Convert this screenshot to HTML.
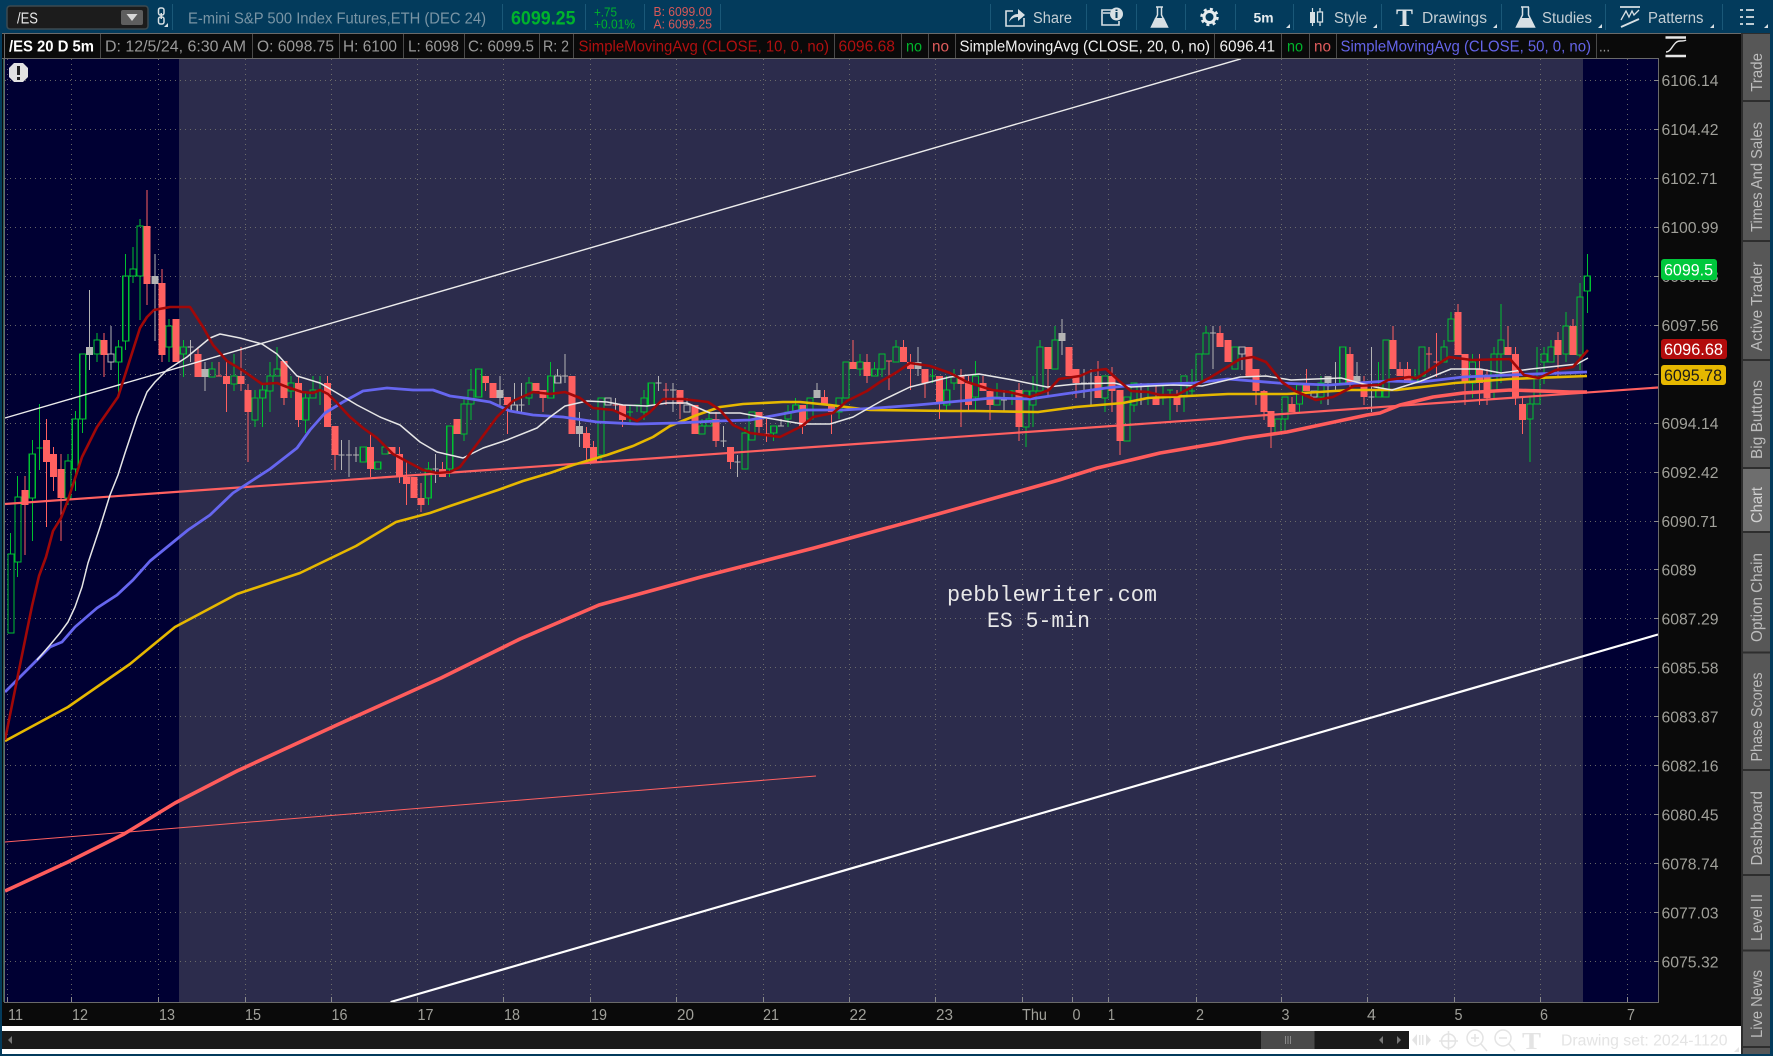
<!DOCTYPE html>
<html><head><meta charset="utf-8"><title>/ES 5-min chart</title>
<style>
html,body{margin:0;padding:0;background:#033b5c;width:1773px;height:1056px;overflow:hidden}
svg{display:block}
text{font-family:"Liberation Sans",sans-serif}
.ib{font-size:15.5px;fill:#9a9a9a}
.ax{font-size:15.5px;fill:#a0a09a}
.tb{font-size:15.5px;fill:#c4ced4}
.tab{font-size:15.5px;fill:#bcbcbc}
</style></head><body>
<svg width="1773" height="1056" viewBox="0 0 1773 1056" xmlns="http://www.w3.org/2000/svg">
<rect width="1773" height="1056" fill="#033b5c"/>
<!-- chart area -->
<rect x="2" y="33" width="1741" height="1021" fill="#0a0a0a"/>
<rect x="5" y="59" width="1653" height="943" fill="#2c2c4c"/>
<rect x="5" y="59" width="174" height="943" fill="#000033"/>
<rect x="1583" y="59" width="75" height="943" fill="#000033"/>
<!-- grid -->
<path fill="none" stroke="#7c7c70" stroke-opacity=".8" stroke-width="1" stroke-dasharray="1 4" d="M5 80.500H1658M5 129.500H1658M5 178.500H1658M5 227.500H1658M5 276.500H1658M5 325.500H1658M5 374.500H1658M5 423.500H1658M5 472.500H1658M5 521.500H1658M5 569.500H1658M5 618.500H1658M5 667.500H1658M5 716.500H1658M5 765.500H1658M5 814.500H1658M5 863.500H1658M5 912.500H1658M5 961.500H1658"/>
<path fill="none" stroke="#7c7c70" stroke-opacity=".8" stroke-width="1" stroke-dasharray="1 4" d="M7.500 59V1002M71.500 59V1002M158.500 59V1002M245.500 59V1002M331.500 59V1002M417.500 59V1002M503.500 59V1002M590.500 59V1002M676.500 59V1002M763.500 59V1002M849.500 59V1002M935.500 59V1002M1022.500 59V1002M1072.500 59V1002M1108.500 59V1002M1196.500 59V1002M1281.500 59V1002M1367.500 59V1002M1454.500 59V1002M1540.500 59V1002M1627.500 59V1002"/>
<!-- candles -->
<g fill="none" shape-rendering="crispEdges">
<path stroke="#ff6060" stroke-width="1" d="M25 476V555M46.700 419V527M53.700 447V491M61 454V541M104 333V377M147 190V305M162 269V362M176 319V362M198 347V377M219 362V376M226.700 362V412M241 347V391M248 384V462M284 361V405M298.700 376V427M327.300 376V427M335 426V470M370.700 433V477M392 447V454M399.300 447V483M406.700 462V505M414 477V498M421 483V512M442.700 462V477M457 419V434M485.700 376V391M493 383V398M507.300 398V434M536 383V391M543 390V412M572 376V434M586.700 427V462M593.700 441V462M622.700 405V427M666 383V405M680 390V419M695 405V434M716 412V447M730.700 447V469M759 412V434M766.700 419V442M802.700 405V434M824.300 390V405M831.700 405V434M853 340V369M867 354V383M889 361V390M903.300 340V362M910.700 354V390M925 369V398M939.300 376V419M961 369V427M968.400 376V412M982.800 376V391M990 391V420M1019 383V441M1048 347V397M1069 347V376M1076 369V398M1098 361V398M1112 367V412M1120 390V455M1156 383V405M1177 390V412M1220 326V347M1228 347V362M1249 347V376M1256 369V405M1264 390V420M1271 411V448M1292 397V412M1306.700 369V391M1350 347V390M1364 376V405M1393 326V369M1400 362V376M1407.700 362V383M1429 347V369M1436.500 333V377M1458 304V355M1465 354V405M1479.500 354V405M1487 369V405M1508 326V355M1515.600 347V405M1522.700 398V434M1558 332V378M1573 319V355"/>
<path stroke="#ff6060" stroke-width="1" d="M216 376h6M763.700 434h6M886 361h6M1426 354h6M1433.500 362h6M663 390h6M612.700 405h6"/>
<path stroke="#ff6060" stroke-width="7" d="M25 490V505M46.700 440V462M53.700 454V477M61 469V498M104 340V355M147 226V284M162 283V355M176 319V362M198 354V377M226.700 376V384M241 376V384M248 390V412M284 361V398M298.700 383V420M327.300 383V427M335 426V455M370.700 447V469M392 447V454M399.300 454V477M406.700 477V484M414 477V498M421 498V505M442.700 469V477M457 419V434M485.700 376V383M493 383V398M507.300 397V405M536 383V391M543 390V398M572 376V434M586.700 433V448M593.700 447V462M622.700 405V420M680 390V404M695 405V434M716 419V441M730.700 447V462M759 412V427M802.700 405V426M824.300 397V405M831.700 405V412M853 362V369M867 362V376M903.300 347V362M910.700 362V369M925 369V383M939.300 376V404M961 376V384M968.400 383V405M982.800 383V391M990 391V405M1019 390V427M1048 347V369M1069 347V376M1076 369V383M1098 376V398M1112 376V391M1120 390V441M1156 398V405M1177 397V405M1220 333V347M1228 340V362M1249 347V376M1256 369V391M1264 391V412M1271 411V427M1292 404V412M1306.700 383V391M1350 354V383M1364 383V397M1393 340V369M1400 369V376M1407.700 369V383M1458 312V355M1465 354V383M1479.500 369V383M1487 376V398M1508 347V355M1515.600 354V398M1522.700 404V420M1558 340V355M1573 326V355"/>
<path stroke="#00c030" stroke-width="1" d="M10.700 533V554M17.700 476V497M17.700 562V577M32.300 440V454M32.300 498V541M39.300 404V470M36.300 448h6M68 454V461M68 498V505M75.300 411V419M75.300 469V491M82.700 419V433M97 333V340M97 354V362M118.700 340V347M118.700 362V393M125.700 254V276M125.700 341V350M133 247V269M133 276V283M140 219V226M140 276V320M169 319V326M169 347V362M183.300 340V347M183.300 354V377M212 362V369M234 354V376M234 384V391M255 390V398M255 420V427M262.700 383V390M262.700 398V427M270 362V376M270 391V412M277 347V369M291 376V383M291 391V398M305.700 391V398M305.700 420V433M313 376V390M320 376V405M317 390h6M428.300 462V469M428.300 498V505M449.700 469V477M464 397V404M464 434V441M471 369V390M471 404V420M529 377V383M529 398V405M550.700 362V376M601 455V462M630 405V422M627 412h6M637 405V412M634 405h6M644 390V398M644 412V420M702 419V426M709 412V419M745 427V433M773.700 433V441M788 405V412M788 419V427M795.700 398V405M839 412V419M860 354V362M860 369V376M874.700 362V369M882 369V377M896 340V347M932.300 369V383M929.300 376h6M946.700 376V390M946.700 405V412M954 369V377M954 383V390M975.600 361V376M975.600 397V412M997 383V397M1012 390V405M1009 391h6M1026 427V447M1033 376V391M1033 405V427M1040 340V347M1055 326V340M1105 398V412M1134 405V412M1148 383V405M1145 384h6M1163 384V405M1160 398h6M1170 390V420M1167 390h6M1184 397V412M1192 369V397M1189 391h6M1206 326V333M1285 419V433M1299.500 404V412M1321 376V383M1321 397V404M1378.700 362V390M1414.800 369V377M1444 340V347M1451 312V319M1472.500 354V362M1472.500 383V398M1494 347V354M1494 391V398M1501 304V340M1501 354V383M1530 397V404M1530 419V462M1537 347V377M1544 347V354M1544 362V384M1551 340V347M1566 312V326M1566 354V362M1580 283V297M1580 355V370M1587.300 254V276M1587.300 291V313"/>
<path stroke="#00c030" stroke-width="1.200" d="M8 554h6V633h-6zM15 497h6V562h-6zM29.300 454h6V498h-6zM65 461h6V498h-6zM72.300 419h6V469h-6zM79.700 354h6V419h-6zM94 340h6V354h-6zM115.700 347h6V362h-6zM122.700 276h6V341h-6zM130 269h6V276h-6zM137 226h6V276h-6zM166 326h6V347h-6zM180.300 347h6V354h-6zM209 369h6V377h-6zM231 376h6V384h-6zM252 398h6V420h-6zM259.700 390h6V398h-6zM267 376h6V391h-6zM274 369h6V376h-6zM288 383h6V391h-6zM302.700 398h6V420h-6zM310 390h6V398h-6zM360.300 447h6V462h-6zM374.700 462h6V469h-6zM382 447h6V454h-6zM425.300 469h6V498h-6zM446.700 426h6V469h-6zM461 404h6V434h-6zM468 390h6V404h-6zM475.700 369h6V397h-6zM526 383h6V398h-6zM547.700 376h6V398h-6zM598 398h6V455h-6zM641 398h6V412h-6zM648.300 383h6V405h-6zM699 426h6V434h-6zM706 419h6V426h-6zM742 433h6V469h-6zM749 412h6V440h-6zM770.700 426h6V433h-6zM785 412h6V419h-6zM792.700 405h6V412h-6zM807 398h6V419h-6zM836 398h6V412h-6zM843 362h6V398h-6zM857 362h6V369h-6zM871.700 369h6V376h-6zM879 354h6V369h-6zM893 347h6V362h-6zM943.700 390h6V405h-6zM951 377h6V383h-6zM972.600 376h6V397h-6zM994 397h6V405h-6zM1023 391h6V427h-6zM1030 391h6V405h-6zM1037 347h6V391h-6zM1052 340h6V369h-6zM1102 376h6V398h-6zM1124 397h6V441h-6zM1131 383h6V405h-6zM1181 376h6V397h-6zM1196 354h6V383h-6zM1203 333h6V354h-6zM1232 347h6V369h-6zM1275 419h6V433h-6zM1282 397h6V419h-6zM1296.500 385h6V404h-6zM1318 383h6V397h-6zM1339.700 347h6V383h-6zM1375.700 390h6V397h-6zM1383 340h6V397h-6zM1411.800 377h6V383h-6zM1419 347h6V376h-6zM1441 347h6V362h-6zM1448 319h6V341h-6zM1469.500 362h6V383h-6zM1491 354h6V391h-6zM1498 340h6V354h-6zM1527 404h6V419h-6zM1534 377h6V404h-6zM1541 354h6V362h-6zM1548 347h6V362h-6zM1563 326h6V354h-6zM1577 297h6V355h-6zM1584.300 276h6V291h-6z"/>
<path stroke="#b4b4b4" stroke-width="1" d="M89.700 290V370M155 254V341M205 362V391M500 376V405M579.300 412V447M817 383V398M918 347V376M1062 319V355M1328 376V405M1357 362V383M111 326V354M111 362V370M514.300 383V405M557.700 369V376M687 398V405M1242 354V370M190.700 340V362M187.700 347h6M341.700 440V470M338.700 455h6M349 440V477M346 455h6M356 447V462M353 455h6M435.300 454V483M432.300 469h6M521.700 383V412M518.700 405h6M565 354V383M562 376h6M658.700 376V391M655.700 383h6M673 383V412M670 390h6M723.300 426V447M720.300 441h6M737.700 455V477M734.700 462h6M781 419V426M778 426h6M1004 390V412M1001 400h6M1084 369V398M1081 383h6M1091 369V405M1088 383h6M1141 383V405M1138 384h6M1213 326V369M1210 333h6M1335.500 362V390M1332.500 378h6M1371.500 347V412M1368.500 397h6M615.700 398V412"/>
<path stroke="#b4b4b4" stroke-width="7" d="M89.700 347V355M155 276V284M205 369V377M500 390V398M579.300 426V434M817 390V398M918 362V369M1062 333V341M1328 376V383M1357 376V383"/>
<path stroke="#b4b4b4" stroke-width="1.200" d="M108 354h6V362h-6zM511.300 405h6V412h-6zM554.700 376h6V383h-6zM605 398h6V405h-6zM684 405h6V412h-6zM1239 347h6V354h-6zM1311 391h6V397h-6z"/>
</g>
<!-- trend lines -->
<g fill="none" stroke-linejoin="round" stroke-linecap="butt">
<path stroke="#ececec" stroke-width="1.400" d="M5 418L1241 58.800"/>
<path stroke="#ffffff" stroke-width="2.200" d="M390.600 1002L1658 634.500"/>
<path stroke="#ff6060" stroke-width="1" d="M5 842L816 776"/>
<path stroke="#ff6060" stroke-width="2.200" d="M5 504L1658 387.500"/>
<!-- thick -->
<polyline stroke="#ff5c5c" stroke-width="3.600" points="5,891 68,862 124,834 175,803 237,771 339,724 441,678 520,639 599,605 701,577 814,548 938,514 1059,480 1097,468 1131,460 1160,453 1219,443 1245,438 1287,432 1320,425 1367,415 1380,413 1400,405 1433,397 1463,393 1510,390 1570,392 1587,392"/>
<!-- yellow -->
<polyline stroke="#e6b800" stroke-width="2.600" points="5,741 68,707 130,664 175,627 237,594 300,573 356,546 396,522 430,513 450,506 498,490 523,481 550,473 573,465 607,455 633,446 653,437 670,426 697,415 720,407 743,404 783,402 800,402 830,405 870,410 950,411 975,411 1038,412 1076,407 1123,403 1148,398 1228,394 1287,394 1350,390 1396,390 1455,383 1510,379 1587,376"/>
<!-- blue -->
<polyline stroke="#6666f0" stroke-width="2.800" points="5,692 37,660 50,647 62,642 75,627 97,608 117,595 133,580 150,561 188,530 210,515 233,493 253,480 270,469 297,448 310,430 325,413 343,402 363,391 387,388 413,390 433,390 450,396 465,398 490,402 510,411 533,415 563,417 597,422 637,424 677,423 717,421 750,420 777,415 803,410 843,410 877,408 917,405 950,402 992,398 1030,399 1064,394 1106,388 1135,385 1194,383 1228,379 1278,383 1329,385 1388,381 1421,382 1463,377 1510,375 1587,372"/>
<!-- white 20 -->
<polyline stroke="#e6e6e6" stroke-width="1.500" points="37,660 50,645 60,633 68,622 75,607 82,587 88,563 100,527 110,495 118,475 125,453 137,417 147,392 155,382 167,370 187,357 210,338 220,334 240,338 262,344 277,354 297,376 320,383 337,393 357,405 380,417 400,425 420,442 437,452 450,455 463,458 483,448 507,440 537,428 550,417 565,406 587,401 607,402 623,405 647,406 667,403 687,403 710,413 740,413 767,418 803,424 830,424 853,417 883,400 910,387 930,382 950,377 979,374 1013,380 1047,387 1076,384 1114,383 1131,387 1173,385 1202,386 1240,377 1266,376 1291,380 1341,378 1375,387 1392,390 1421,381 1451,369 1480,369 1501,373 1531,369 1577,364 1588,358"/>
<!-- red 10 -->
<polyline stroke="#a00808" stroke-width="2.600" points="5,740 21,660 32,606 39,576 46,557 53,531 61,518 68,500 82,457 97,427 118,397 133,350 140,328 147,317 154,310 170,307 190,307 203,327 213,345 227,361 242,370 262,384 277,383 287,387 302,392 313,393 320,390 328,394 337,403 350,417 363,428 377,438 393,454 408,462 423,470 437,473 450,472 460,467 480,440 497,417 513,401 533,392 550,394 565,392 580,398 593,408 613,410 637,421 650,412 663,399 683,399 708,402 720,410 733,425 750,433 780,437 802,426 813,417 833,413 847,401 867,391 880,382 897,372 910,363 930,366 950,373 967,382 992,390 1009,392 1030,397 1049,390 1059,379 1080,376 1091,371 1106,369 1118,380 1131,391 1148,392 1160,395 1177,395 1192,387 1211,377 1240,359 1253,357 1266,362 1282,382 1295,391 1316,400 1333,397 1354,386 1379,385 1388,380 1409,377 1417,378 1449,357 1472,360 1510,359 1524,375 1539,378 1556,370 1573,367 1588,350"/>
</g>
<!-- overlay text -->
<text x="947" y="601" font-size="21.800" textLength="210" lengthAdjust="spacingAndGlyphs" style="font-family:'Liberation Mono',monospace" fill="#e8e8e8">pebblewriter.com</text>
<text x="987" y="627" font-size="21.800" textLength="103" lengthAdjust="spacingAndGlyphs" style="font-family:'Liberation Mono',monospace" fill="#e8e8e8">ES 5-min</text>
<!-- alert icon -->
<path d="M14 63h9l5 5v9l-5 5h-9l-5-5v-9z" fill="#e2e2e2"/>
<rect x="17" y="66" width="3" height="9" fill="#222"/><rect x="17" y="77" width="3" height="3" fill="#222"/>
<!-- chart borders -->
<path fill="none" stroke="#6a6a6a" stroke-width="1" d="M4.500 33V1002.500H1658.500V58.500H2"/>
<path fill="none" stroke="#2f5f58" stroke-width="1" d="M3.500 59V1002"/>
<path fill="none" stroke="#6a6a6a" stroke-width="1" d="M2 33.500H1743"/>
<!-- bottom ticks -->
<path fill="none" stroke="#8a8a8a" stroke-width="1" d="M7.500 997V1002M71.500 997V1002M158.500 997V1002M245.500 997V1002M331.500 997V1002M417.500 997V1002M503.500 997V1002M590.500 997V1002M676.500 997V1002M763.500 997V1002M849.500 997V1002M935.500 997V1002M1022.500 997V1002M1072.500 997V1002M1108.500 997V1002M1196.500 997V1002M1281.500 997V1002M1367.500 997V1002M1454.500 997V1002M1540.500 997V1002M1627.500 997V1002"/>
<path fill="none" stroke="#8a8a8a" stroke-width="1" d="M1654 80.500h5M1654 129.500h5M1654 178.500h5M1654 227.500h5M1654 276.500h5M1654 325.500h5M1654 374.500h5M1654 423.500h5M1654 472.500h5M1654 521.500h5M1654 569.500h5M1654 618.500h5M1654 667.500h5M1654 716.500h5M1654 765.500h5M1654 814.500h5M1654 863.500h5M1654 912.500h5M1654 961.500h5"/>
<!-- info bar -->
<rect x="5" y="34" width="1653" height="24" fill="#0a0a0a"/>
<path fill="none" stroke="#4a4a4a" stroke-width="1" d="M100.500 34V58M252.500 34V58M339.500 34V58M403.500 34V58M464.500 34V58M539.500 34V58M573.500 34V58M834.500 34V58M901.500 34V58M928.500 34V58M955.500 34V58M1214.500 34V58M1281.500 34V58M1309.500 34V58M1336.500 34V58M1596.500 34V58"/>
<text x="9" y="51.500" font-size="15.500" font-weight="bold" fill="#fff" textLength="85" lengthAdjust="spacingAndGlyphs">/ES 20 D 5m</text>
<text class="ib" x="105" y="51.500" textLength="141" lengthAdjust="spacingAndGlyphs">D: 12/5/24, 6:30 AM</text>
<text class="ib" x="257" y="51.500" textLength="77" lengthAdjust="spacingAndGlyphs">O: 6098.75</text>
<text class="ib" x="343" y="51.500" textLength="54" lengthAdjust="spacingAndGlyphs">H: 6100</text>
<text class="ib" x="408" y="51.500" textLength="51" lengthAdjust="spacingAndGlyphs">L: 6098</text>
<text class="ib" x="468" y="51.500" textLength="66" lengthAdjust="spacingAndGlyphs">C: 6099.5</text>
<text class="ib" x="543" y="51.500" textLength="26" lengthAdjust="spacingAndGlyphs">R: 2</text>
<text class="ib" style="fill:#b01010" x="578.500" y="51.500" textLength="250.500" lengthAdjust="spacingAndGlyphs">SimpleMovingAvg (CLOSE, 10, 0, no)</text>
<text class="ib" style="fill:#b01010" x="838.500" y="51.500" textLength="56.500" lengthAdjust="spacingAndGlyphs">6096.68</text>
<text class="ib" style="fill:#00b32c" x="906" y="51.500" textLength="16" lengthAdjust="spacingAndGlyphs">no</text>
<text class="ib" style="fill:#e05c5c" x="932" y="51.500" textLength="17" lengthAdjust="spacingAndGlyphs">no</text>
<text class="ib" style="fill:#f0f0f0" x="959.500" y="51.500" textLength="250.500" lengthAdjust="spacingAndGlyphs">SimpleMovingAvg (CLOSE, 20, 0, no)</text>
<text class="ib" style="fill:#f0f0f0" x="1219.500" y="51.500" textLength="55.500" lengthAdjust="spacingAndGlyphs">6096.41</text>
<text class="ib" style="fill:#00b32c" x="1287" y="51.500" textLength="16" lengthAdjust="spacingAndGlyphs">no</text>
<text class="ib" style="fill:#e05c5c" x="1314" y="51.500" textLength="17" lengthAdjust="spacingAndGlyphs">no</text>
<text class="ib" style="fill:#6464e8" x="1340.500" y="51.500" textLength="250.500" lengthAdjust="spacingAndGlyphs">SimpleMovingAvg (CLOSE, 50, 0, no)</text>
<text class="ib" x="1599" y="51.500" textLength="11" lengthAdjust="spacingAndGlyphs">...</text>
<!-- toolbar -->
<path fill="none" stroke="#1a5878" stroke-width="1" d="M172.500 4V30M502.500 4V30M585.500 4V30M644.500 4V30M720.500 4V30M990.500 4V30M1086.500 4V30M1136.500 4V30M1185.500 4V30M1235.500 4V30M1293.500 4V30M1381.500 4V30M1501.500 4V30M1605.500 4V30M1722.500 4V30"/>
<rect x="7" y="6" width="141" height="23" rx="3" fill="#1c1c1c" stroke="#3c4a50" stroke-width="1.500"/>
<text x="17" y="23.500" font-size="15.500" fill="#e8e8e8" textLength="21" lengthAdjust="spacingAndGlyphs">/ES</text>
<rect x="121" y="10" width="22" height="15" rx="2" fill="#5e5e5e"/>
<path d="M126.500 14h11l-5.500 7z" fill="#d8d8d8"/>
<g fill="none" stroke="#d8e0e4" stroke-width="1.500"><rect x="158.500" y="8" width="5.500" height="7" rx="2"/><rect x="158.500" y="17" width="5.500" height="7" rx="2"/></g>
<path d="M161.250 13v6" stroke="#d8e0e4" stroke-width="1.500"/>
<path d="M168 27h-4l4-4z" fill="#d8e0e4"/>
<text x="188" y="23.500" font-size="15.500" fill="#7a95a5" textLength="298" lengthAdjust="spacingAndGlyphs">E-mini S&amp;P 500 Index Futures,ETH (DEC 24)</text>
<text x="511" y="24.500" font-size="19" font-weight="bold" fill="#00b32c" textLength="64.500" lengthAdjust="spacingAndGlyphs">6099.25</text>
<text x="594" y="16.500" font-size="12.500" fill="#00b32c" textLength="23" lengthAdjust="spacingAndGlyphs">+.75</text>
<text x="594" y="28.500" font-size="12.500" fill="#00b32c" textLength="41" lengthAdjust="spacingAndGlyphs">+0.01%</text>
<text x="653.500" y="16" font-size="12.500" fill="#d85858" textLength="58.500" lengthAdjust="spacingAndGlyphs">B: 6099.00</text>
<text x="653.500" y="28.500" font-size="12.500" fill="#d85858" textLength="58.500" lengthAdjust="spacingAndGlyphs">A: 6099.25</text>
<!-- share icon -->
<path fill="none" stroke="#d8e0e4" stroke-width="1.600" d="M1013 11h-7v15h18v-8"/>
<path fill="#d8e0e4" d="M1009 22c1-5 5-8 9-8v-5l7 6-7 6v-4c-4 0-7 2-9 5z"/>
<text class="tb" x="1033" y="23" textLength="39" lengthAdjust="spacingAndGlyphs">Share</text>
<!-- info doc -->
<path fill="none" stroke="#d8e0e4" stroke-width="1.600" d="M1112 10h-10v15h17v-4"/>
<path d="M1103 13h7" stroke="#d8e0e4" stroke-width="1.500"/>
<circle cx="1116.500" cy="14" r="6.500" fill="#d8e0e4"/>
<path d="M1116.500 12v6M1116.500 9.500v1.500" stroke="#033b5c" stroke-width="2"/>
<!-- flask -->
<path fill="none" stroke="#d8e0e4" stroke-width="1.500" d="M1156 7h7M1157.500 7v8l-6 12h16l-6-12V7"/>
<path fill="#d8e0e4" d="M1155 18h9l4 9h-17z"/>
<!-- gear -->
<circle cx="1209.500" cy="17" r="5.500" fill="none" stroke="#e6ecef" stroke-width="3"/>
<circle cx="1209.500" cy="17" r="8" fill="none" stroke="#e6ecef" stroke-width="2.500" stroke-dasharray="3 3.300"/>
<text x="1253.500" y="22.500" font-size="13.500" font-weight="bold" fill="#e6ecef" textLength="20" lengthAdjust="spacingAndGlyphs">5m</text>
<!-- style candles -->
<g fill="#d8e0e4"><rect x="1310" y="12" width="5" height="11"/><rect x="1311.900" y="8" width="1.200" height="18"/></g>
<path fill="none" stroke="#d8e0e4" stroke-width="1.300" d="M1320 8v4M1320 22v4M1317.500 12h5v10h-5z"/>
<text class="tb" x="1334" y="23" textLength="33" lengthAdjust="spacingAndGlyphs">Style</text>
<!-- T -->
<text x="1396" y="26" font-size="25" font-weight="bold" fill="#d8e0e4" textLength="17" lengthAdjust="spacingAndGlyphs" style="font-family:'Liberation Serif',serif">T</text>
<text class="tb" x="1422" y="23" textLength="65" lengthAdjust="spacingAndGlyphs">Drawings</text>
<path fill="none" stroke="#d8e0e4" stroke-width="1.500" d="M1521 7h8M1522.500 7v8l-6 12h18l-6-12V7"/>
<path fill="#d8e0e4" d="M1520.500 18h10l4.500 9h-19z"/>
<text class="tb" x="1542" y="23" textLength="50" lengthAdjust="spacingAndGlyphs">Studies</text>
<!-- patterns -->
<path fill="none" stroke="#d8e0e4" stroke-width="1.800" d="M1620 7h20"/>
<path fill="none" stroke="#d8e0e4" stroke-width="1.300" d="M1621 20l5-9 3 6 3-6 2 4 5-5"/>
<path fill="none" stroke="#d8e0e4" stroke-width="1.800" d="M1621 27l18-8"/>
<text class="tb" x="1648" y="23" textLength="55.500" lengthAdjust="spacingAndGlyphs">Patterns</text>
<!-- menu -->
<path fill="none" stroke="#d8e0e4" stroke-width="1.800" d="M1740 10h3M1746 10h8M1740 17h3M1746 17h8M1740 24h3M1746 24h8"/>
<path fill="#d8e0e4" d="M1290 28h-4l4-4zM1377 28h-4l4-4zM1497 28h-4l4-4zM1602 28h-4l4-4zM1714 28h-4l4-4zM1768 28h-4l4-4z"/>
<!-- right panel -->
<rect x="1659" y="34" width="82" height="992" fill="#0a0a0a"/>
<path fill="none" stroke="#e6e6e6" stroke-width="2.500" d="M1665.500 37.500h20.500M1665.500 56h20.500"/>
<path fill="none" stroke="#e6e6e6" stroke-width="1.400" d="M1666 52C1672 52 1673 41 1680 41C1683 41 1685 41 1686 40"/>
<text class="ax" x="1661.500" y="86" textLength="57" lengthAdjust="spacingAndGlyphs">6106.14</text>
<text class="ax" x="1661.500" y="135" textLength="57" lengthAdjust="spacingAndGlyphs">6104.42</text>
<text class="ax" x="1661.500" y="184" textLength="56" lengthAdjust="spacingAndGlyphs">6102.71</text>
<text class="ax" x="1661.500" y="233" textLength="57" lengthAdjust="spacingAndGlyphs">6100.99</text>
<text class="ax" x="1661.500" y="282" textLength="57" lengthAdjust="spacingAndGlyphs">6099.28</text>
<text class="ax" x="1661.500" y="331" textLength="57" lengthAdjust="spacingAndGlyphs">6097.56</text>
<text class="ax" x="1661.500" y="429" textLength="57" lengthAdjust="spacingAndGlyphs">6094.14</text>
<text class="ax" x="1661.500" y="478" textLength="57" lengthAdjust="spacingAndGlyphs">6092.42</text>
<text class="ax" x="1661.500" y="527" textLength="56" lengthAdjust="spacingAndGlyphs">6090.71</text>
<text class="ax" x="1661.500" y="575.700" textLength="35" lengthAdjust="spacingAndGlyphs">6089</text>
<text class="ax" x="1661.500" y="624.600" textLength="57" lengthAdjust="spacingAndGlyphs">6087.29</text>
<text class="ax" x="1661.500" y="673.600" textLength="57" lengthAdjust="spacingAndGlyphs">6085.58</text>
<text class="ax" x="1661.500" y="722.500" textLength="57" lengthAdjust="spacingAndGlyphs">6083.87</text>
<text class="ax" x="1661.500" y="771.500" textLength="57" lengthAdjust="spacingAndGlyphs">6082.16</text>
<text class="ax" x="1661.500" y="820.400" textLength="57" lengthAdjust="spacingAndGlyphs">6080.45</text>
<text class="ax" x="1661.500" y="869.400" textLength="57" lengthAdjust="spacingAndGlyphs">6078.74</text>
<text class="ax" x="1661.500" y="918.300" textLength="57" lengthAdjust="spacingAndGlyphs">6077.03</text>
<text class="ax" x="1661.500" y="967.300" textLength="57" lengthAdjust="spacingAndGlyphs">6075.32</text>
<rect x="1661" y="259" width="56" height="21" rx="3" fill="#00c83c"/>
<text x="1664" y="275.500" font-size="16.500" fill="#fff" textLength="49" lengthAdjust="spacingAndGlyphs">6099.5</text>
<rect x="1661" y="339" width="66" height="20" rx="3" fill="#b30c0c"/>
<text x="1664" y="355" font-size="16.500" fill="#fff" textLength="59" lengthAdjust="spacingAndGlyphs">6096.68</text>
<rect x="1661" y="365" width="65" height="20" rx="3" fill="#e6b800"/>
<text x="1664" y="381" font-size="16.500" fill="#1a1a1a" textLength="58" lengthAdjust="spacingAndGlyphs">6095.78</text>
<!-- x axis labels -->
<text class="ax" x="8" y="1020" textLength="15" lengthAdjust="spacingAndGlyphs">11</text>
<text class="ax" x="72" y="1020" textLength="16" lengthAdjust="spacingAndGlyphs">12</text>
<text class="ax" x="159" y="1020" textLength="16" lengthAdjust="spacingAndGlyphs">13</text>
<text class="ax" x="245" y="1020" textLength="16" lengthAdjust="spacingAndGlyphs">15</text>
<text class="ax" x="331.500" y="1020" textLength="16" lengthAdjust="spacingAndGlyphs">16</text>
<text class="ax" x="417.500" y="1020" textLength="16" lengthAdjust="spacingAndGlyphs">17</text>
<text class="ax" x="504" y="1020" textLength="16" lengthAdjust="spacingAndGlyphs">18</text>
<text class="ax" x="591" y="1020" textLength="16" lengthAdjust="spacingAndGlyphs">19</text>
<text class="ax" x="677" y="1020" textLength="17" lengthAdjust="spacingAndGlyphs">20</text>
<text class="ax" x="763" y="1020" textLength="16" lengthAdjust="spacingAndGlyphs">21</text>
<text class="ax" x="849.500" y="1020" textLength="17" lengthAdjust="spacingAndGlyphs">22</text>
<text class="ax" x="936" y="1020" textLength="17" lengthAdjust="spacingAndGlyphs">23</text>
<text class="ax" x="1022" y="1020" textLength="25" lengthAdjust="spacingAndGlyphs">Thu</text>
<text class="ax" x="1072.500" y="1020" textLength="8" lengthAdjust="spacingAndGlyphs">0</text>
<text class="ax" x="1108" y="1020" textLength="7" lengthAdjust="spacingAndGlyphs">1</text>
<text class="ax" x="1196" y="1020" textLength="8" lengthAdjust="spacingAndGlyphs">2</text>
<text class="ax" x="1281.500" y="1020" textLength="8" lengthAdjust="spacingAndGlyphs">3</text>
<text class="ax" x="1367" y="1020" textLength="9" lengthAdjust="spacingAndGlyphs">4</text>
<text class="ax" x="1454.500" y="1020" textLength="8" lengthAdjust="spacingAndGlyphs">5</text>
<text class="ax" x="1540" y="1020" textLength="8" lengthAdjust="spacingAndGlyphs">6</text>
<text class="ax" x="1627" y="1020" textLength="8" lengthAdjust="spacingAndGlyphs">7</text>
<!-- bottom bar -->
<rect x="2" y="1026" width="1739" height="28" fill="#fff"/>
<rect x="2" y="1031" width="1407" height="18" fill="#1a1a1a"/>
<rect x="1261" y="1031" width="53.500" height="18" fill="#4a4a4a"/>
<path stroke="#8a8a8a" stroke-width="1" d="M1285.500 1036v8M1288 1036v8M1290.500 1036v8"/>
<path fill="#777" d="M12 1036v8l-4-4zM1383 1036v8l-4-4zM1397 1036v8l4-4z"/>
<g fill="none" stroke="#e4e4e4" stroke-width="1.500">
<path fill="#e4e4e4" stroke="none" d="M1417 1034v12l-5-6zM1426 1034v12l5-6zM1419 1035h1.500v10H1419zM1422 1035h1.500v10H1422z"/>
<circle cx="1448.500" cy="1041" r="7"/><path d="M1448.500 1031v19M1439 1041h19"/>
<circle cx="1475" cy="1038" r="8"/><path d="M1481 1044l6 7M1475 1034v8M1471 1038h8"/>
<circle cx="1503" cy="1038" r="8"/><path d="M1509 1044l6 7M1499 1038h8"/>
</g>
<text x="1522" y="1049" font-size="24" font-weight="bold" fill="#e4e4e4" textLength="19" lengthAdjust="spacingAndGlyphs" style="font-family:'Liberation Serif',serif">T</text>
<text x="1561" y="1045.500" font-size="15.500" fill="#e4e4e4" textLength="166.500" lengthAdjust="spacingAndGlyphs">Drawing set: 2024-1120</text>
<path fill="#e4e4e4" d="M1739 1052h-5l5-5z"/>
<!-- tabs -->
<rect x="1741" y="33" width="29" height="1023" fill="#2e2e2e"/>
<g fill="#575757">
<rect x="1743" y="34" width="27" height="66"/><rect x="1743" y="102" width="27" height="138"/><rect x="1743" y="242" width="27" height="117"/><rect x="1743" y="361" width="27" height="106"/>
<rect x="1743" y="469" width="27" height="62" fill="#6e6e6e"/>
<rect x="1743" y="533" width="27" height="118.500"/><rect x="1743" y="653.500" width="27" height="115.500"/><rect x="1743" y="771" width="27" height="103"/><rect x="1743" y="876" width="27" height="73.500"/><rect x="1743" y="951.500" width="27" height="94.500"/><rect x="1743" y="1048" width="27" height="6"/>
</g>
<text class="tab" transform="translate(1762,91.700) rotate(-90)" textLength="38.700" lengthAdjust="spacingAndGlyphs">Trade</text>
<text class="tab" transform="translate(1762,232) rotate(-90)" textLength="110" lengthAdjust="spacingAndGlyphs">Times And Sales</text>
<text class="tab" transform="translate(1762,351) rotate(-90)" textLength="89" lengthAdjust="spacingAndGlyphs">Active Trader</text>
<text class="tab" transform="translate(1762,459) rotate(-90)" textLength="79" lengthAdjust="spacingAndGlyphs">Big Buttons</text>
<text class="tab" transform="translate(1762,523) rotate(-90)" textLength="36" lengthAdjust="spacingAndGlyphs" style="fill:#d0d0d0">Chart</text>
<text class="tab" transform="translate(1762,642) rotate(-90)" textLength="89" lengthAdjust="spacingAndGlyphs">Option Chain</text>
<text class="tab" transform="translate(1762,761.500) rotate(-90)" textLength="89" lengthAdjust="spacingAndGlyphs">Phase Scores</text>
<text class="tab" transform="translate(1762,865.500) rotate(-90)" textLength="74.500" lengthAdjust="spacingAndGlyphs">Dashboard</text>
<text class="tab" transform="translate(1762,941) rotate(-90)" textLength="47" lengthAdjust="spacingAndGlyphs">Level II</text>
<text class="tab" transform="translate(1762,1038) rotate(-90)" textLength="68" lengthAdjust="spacingAndGlyphs">Live News</text>
<rect x="1770" y="0" width="3" height="1056" fill="#033b5c"/>
<rect x="0" y="1054" width="1773" height="2" fill="#033b5c"/>
<rect x="0" y="0" width="2" height="1056" fill="#033b5c"/>
</svg>
</body></html>
